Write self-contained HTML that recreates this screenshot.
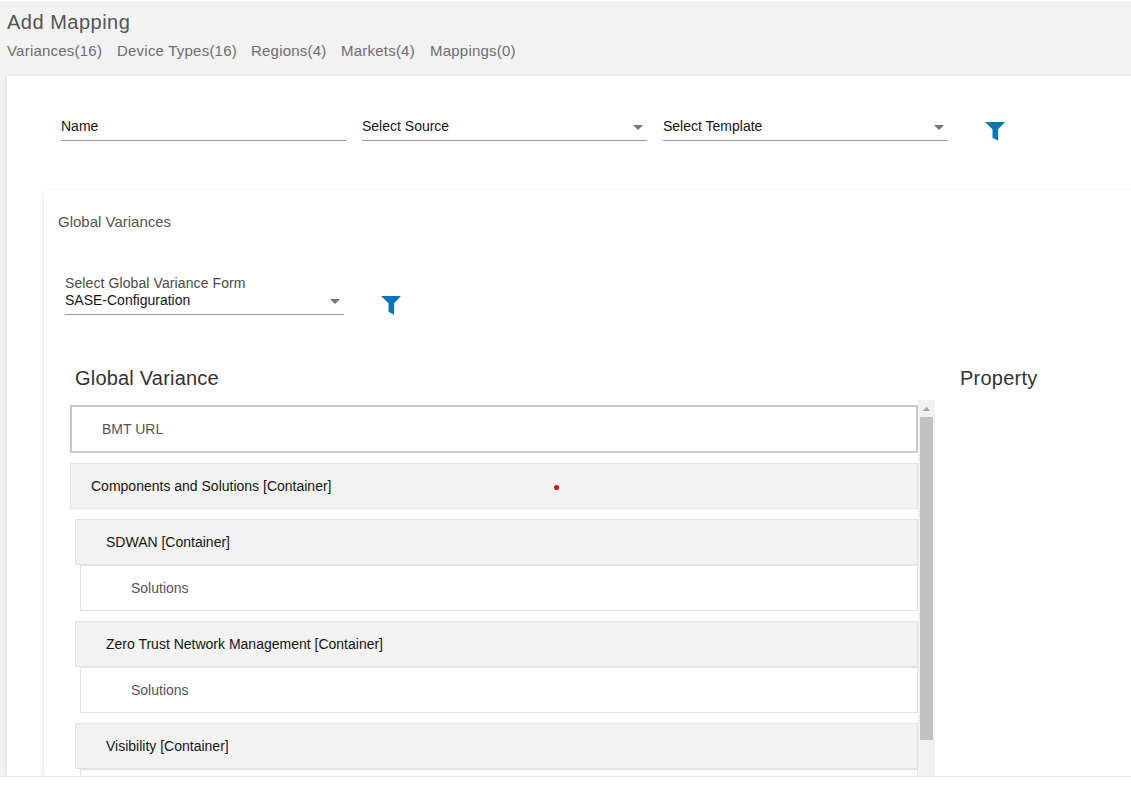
<!DOCTYPE html>
<html>
<head>
<meta charset="utf-8">
<style>
html,body{margin:0;padding:0;}
body{width:1131px;height:788px;overflow:hidden;position:relative;background:#fff;font-family:"Liberation Sans",sans-serif;}
.abs{position:absolute;white-space:pre;}
#bg{position:absolute;left:0;top:1px;width:1131px;height:775px;background:#f2f2f2;}
#bottomline{position:absolute;left:0;top:776px;width:1131px;height:1px;background:#e6e6e6;}
#card1{position:absolute;left:7px;top:76px;width:1200px;height:700px;background:#fff;box-shadow:0 1px 4px rgba(0,0,0,0.13);}
#card2{position:absolute;left:44px;top:190px;width:1200px;height:586px;background:#fff;box-shadow:0 2px 4px rgba(0,0,0,0.17);}
.t20{font-size:20px;line-height:20px;}
.t15{font-size:15px;line-height:15px;}
.tab{letter-spacing:0.22px;color:#6e6e6e;}
.t14{font-size:14px;line-height:14px;}
.uline{position:absolute;height:1px;background:#9a9a9a;}
.caret{position:absolute;width:0;height:0;border-left:5px solid transparent;border-right:5px solid transparent;border-top:5px solid #757575;}
.row{position:absolute;box-sizing:border-box;}
.grey{background:#f2f2f2;border:1px solid #e2e2e2;}
.white{background:#fff;border:1px solid #e2e2e2;}
#clip{position:absolute;left:0;top:0;width:1131px;height:776px;overflow:hidden;}
</style>
</head>
<body>
<div id="clip">
<div id="bg"></div>
<div class="abs t20" style="left:7px;top:12px;color:#545454;letter-spacing:0.5px;">Add Mapping</div>
<div class="abs t15 tab" style="left:7px;top:43px;">Variances(16)</div>
<div class="abs t15 tab" style="left:117px;top:43px;">Device Types(16)</div>
<div class="abs t15 tab" style="left:251px;top:43px;">Regions(4)</div>
<div class="abs t15 tab" style="left:341px;top:43px;">Markets(4)</div>
<div class="abs t15 tab" style="left:430px;top:43px;">Mappings(0)</div>

<div id="card1"></div>
<div class="abs t14" style="left:61px;top:119px;color:#151515;">Name</div>
<div class="uline" style="left:61px;top:140px;width:285px;"></div>
<div class="abs t14" style="left:362px;top:119px;color:#151515;">Select Source</div>
<div class="uline" style="left:362px;top:140px;width:285px;"></div>
<div class="caret" style="left:633px;top:125px;"></div>
<div class="abs t14" style="left:663px;top:119px;color:#151515;">Select Template</div>
<div class="uline" style="left:663px;top:140px;width:285px;"></div>
<div class="caret" style="left:934px;top:125px;"></div>
<svg class="abs" style="left:985px;top:122px;" width="20" height="19" viewBox="0 0 20 19"><path d="M0 0H20L13.1 7.3V18.8L7.5 15.8V7.3Z" fill="#0677b4"/></svg>

<div id="card2"></div>
<div class="abs t15" style="left:58px;top:214px;color:#555;">Global Variances</div>
<div class="abs t14" style="left:65px;top:276px;color:#4a4a4a;letter-spacing:0.1px;">Select Global Variance Form</div>
<div class="abs t14" style="left:65px;top:293px;color:#151515;">SASE-Configuration</div>
<div class="uline" style="left:65px;top:314px;width:279px;"></div>
<div class="caret" style="left:330px;top:299px;"></div>
<svg class="abs" style="left:381px;top:296px;" width="20" height="19" viewBox="0 0 20 19"><path d="M0 0H20L13.1 7.3V18.8L7.5 15.8V7.3Z" fill="#0677b4"/></svg>

<div class="abs t20" style="left:75px;top:368px;color:#333;letter-spacing:0.2px;">Global Variance</div>
<div class="abs t20" style="left:960px;top:368px;color:#333;letter-spacing:0.25px;">Property</div>

<!-- list -->
<div class="row" style="left:70px;top:405px;width:848px;height:48px;background:#fff;border:2px solid #c8c8c8;"></div>
<div class="abs t14" style="left:102px;top:422px;color:#555;">BMT URL</div>

<div class="row grey" style="left:70px;top:463px;width:848px;height:46px;"></div>
<div class="abs t14" style="left:91px;top:479px;color:#151515;">Components and Solutions [Container]</div>
<div class="abs" style="left:553.5px;top:485px;width:5px;height:5px;border-radius:50%;background:#e60000;"></div>

<div class="row grey" style="left:75px;top:519px;width:843px;height:46px;"></div>
<div class="abs t14" style="left:106px;top:535px;color:#151515;">SDWAN [Container]</div>
<div class="row white" style="left:80px;top:565px;width:838px;height:46px;"></div>
<div class="abs t14" style="left:131px;top:581px;color:#555;">Solutions</div>

<div class="row grey" style="left:75px;top:621px;width:843px;height:46px;"></div>
<div class="abs t14" style="left:106px;top:637px;color:#151515;">Zero Trust Network Management [Container]</div>
<div class="row white" style="left:80px;top:667px;width:838px;height:46px;"></div>
<div class="abs t14" style="left:131px;top:683px;color:#555;">Solutions</div>

<div class="row grey" style="left:75px;top:723px;width:843px;height:46px;"></div>
<div class="abs t14" style="left:106px;top:739px;color:#151515;">Visibility [Container]</div>
<div class="row white" style="left:80px;top:769px;width:838px;height:46px;"></div>

<!-- scrollbar -->
<div class="abs" style="left:918px;top:400px;width:17px;height:380px;background:#f1f1f1;"></div>
<svg class="abs" style="left:918px;top:400px;" width="17" height="17" viewBox="0 0 17 17"><path d="M4.8 11H12.2L8.5 6.8Z" fill="#a3a3a3"/></svg>
<div class="abs" style="left:920px;top:417px;width:13px;height:323px;background:#c1c1c1;"></div>
</div>
<div id="bottomline"></div>
</body>
</html>
